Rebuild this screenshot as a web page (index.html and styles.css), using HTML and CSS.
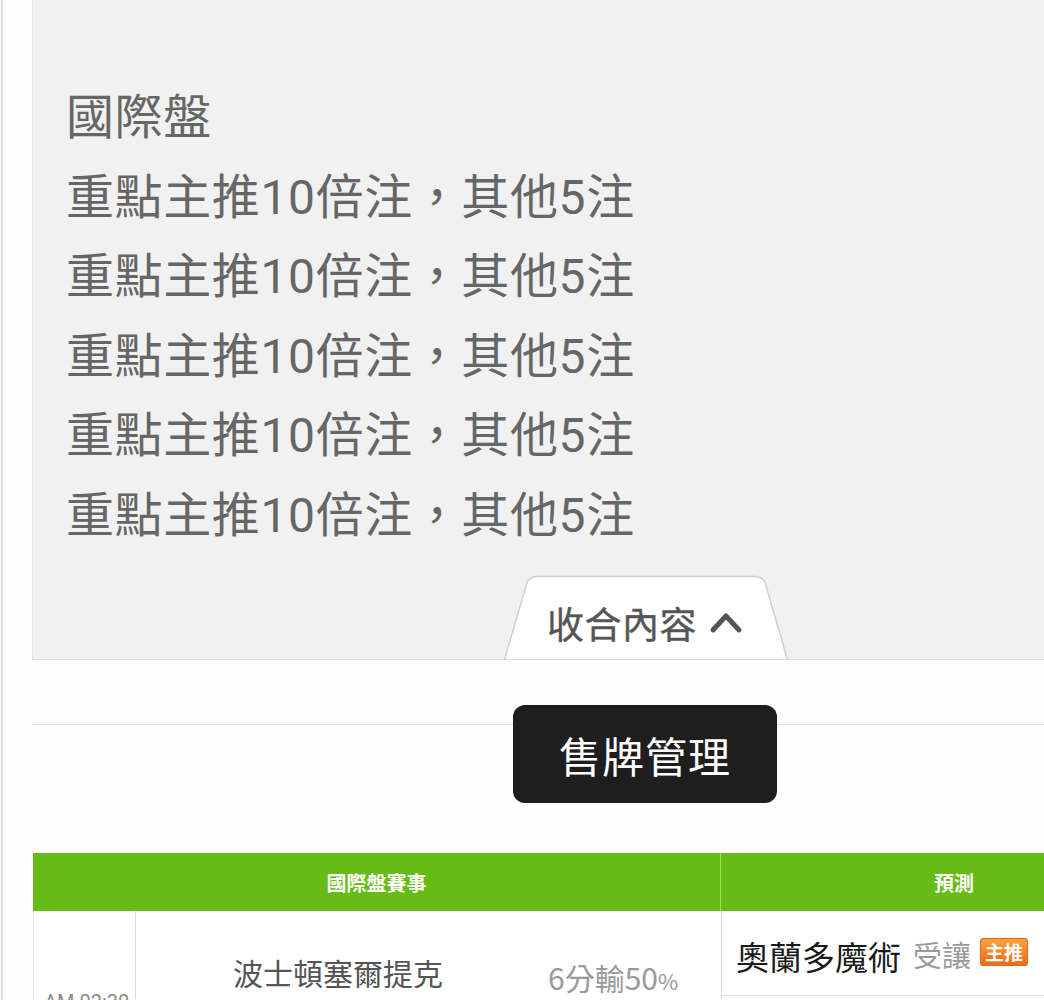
FILE: index.html
```html
<!DOCTYPE html>
<html lang="zh-Hant">
<head>
<meta charset="utf-8">
<link rel="stylesheet" href="styles.css">
</head>
<body>
<div class="page">
  <section class="notice">
    <div class="lines">
      <p>國際盤</p>
      <p>重點主推10倍注，其他5注</p>
      <p>重點主推10倍注，其他5注</p>
      <p>重點主推10倍注，其他5注</p>
      <p>重點主推10倍注，其他5注</p>
      <p>重點主推10倍注，其他5注</p>
    </div>
    <div class="tab">
      <svg class="tab-bg" width="284" height="85" viewBox="0 0 284 85">
        <path d="M0.5 85 L22.5 9 Q24.5 1.5 33 1.5 L251 1.5 Q259.5 1.5 261.5 9 L283.5 85 Z" fill="#ffffff" stroke="#cfcfcf" stroke-width="1.5"/>
      </svg>
      <span class="tab-label">收合內容</span>
      <svg class="chev" width="34" height="24" viewBox="0 0 34 24">
        <path d="M4 20 L17 6 L30 20" fill="none" stroke="#555" stroke-width="5" stroke-linecap="round" stroke-linejoin="round"/>
      </svg>
    </div>
  </section>
  <div class="divider-band"></div>
  <div class="tooltip">售牌管理</div>
  <div class="table">
    <div class="th th-main">國際盤賽事</div>
    <div class="th th-pred">預測</div>
    <div class="td td-time"><span>AM 02:30</span></div>
    <div class="td td-team">波士頓塞爾提克</div>
    <div class="td td-hcp">6分輸50<small>%</small></div>
    <div class="td td-pred">
      <div class="pred-row">
        <span class="pred-team">奧蘭多魔術</span>
        <span class="pred-type">受讓</span>
        <span class="badge">主推</span>
      </div>
    </div>
  </div>
</div>
</body>
</html>
```

FILE: styles.css
```css
html, body {
  margin: 0;
  padding: 0;
  overflow: hidden;
}
body {
  background: #fdfdfd;
  font-family: "Noto Sans CJK TC", "Noto Sans", sans-serif;
  width: 1044px;
  height: 1000px;
}
.page {
  position: relative;
  height: 1000px;
  border-left: 2px solid #dedede;
  margin-left: 1px;
  padding-left: 29px;
}
.notice {
  background: #f1f1f1;
  border-left: 1px solid #e2e2e2;
  border-bottom: 1px solid #dcdcdc;
  width: 1200px;
  height: 660px;
  box-sizing: border-box;
  padding: 78px 0 0 33px;
  display: flex;
  flex-direction: column;
}
.lines p {
  margin: 0;
  font-family: "Roboto", "Noto Sans CJK TC", sans-serif;
  font-size: 48px;
  line-height: 79.6px;
  color: #666666;
  letter-spacing: 0.6px;
}
.tab {
  position: relative;
  margin-top: 19px;
  margin-left: 438px;
  width: 284px;
  height: 85px;
  display: flex;
  align-items: center;
  padding-left: 43px;
  box-sizing: border-box;
  padding-top: 14px;
}
.tab-bg {
  position: absolute;
  left: 0;
  top: 0;
}
.tab-label {
  position: relative;
  font-size: 37px;
  color: #555555;
  line-height: 1;
  letter-spacing: 0.5px;
  -webkit-text-stroke: 0.4px #555555;
}
.chev {
  position: relative;
  margin-left: 12px;
  margin-top: -4px;
}
.divider-band {
  height: 64px;
  border-bottom: 1px solid #dddddd;
  width: 1200px;
}
.tooltip {
  position: absolute;
  left: 510px;
  top: 705px;
  width: 264px;
  height: 98px;
  border-radius: 12px;
  background: #1e1e1e;
  color: #ffffff;
  font-size: 42px;
  display: flex;
  align-items: center;
  justify-content: center;
  letter-spacing: 1px;
}
.table {
  margin-top: 128px;
  margin-left: 1px;
  display: grid;
  grid-template-columns: 103px 404px 181px 466px;
  grid-template-rows: 58px 100px;
  width: 1154px;
}
.th {
  background: #66bb14;
  color: #ffffff;
  font-weight: 700;
  font-size: 20px;
  display: flex;
  align-items: center;
  justify-content: center;
}
.th-main {
  grid-column: 1 / 4;
  border-right: 1px solid #a5d86a;
}
.td {
  background: #ffffff;
}
.td-time {
  border-left: 1px solid #e2e2e2;
  border-right: 1px solid #dddddd;
  padding: 81px 0 0 10px;
  font-size: 20px;
  color: #8a8a8a;
  line-height: 1;
  font-family: "Roboto", "Noto Sans", sans-serif;
}
.td-team {
  text-align: center;
  padding-top: 43px;
  font-size: 30px;
  line-height: 36px;
  color: #555555;
}
.td-hcp {
  padding: 48px 0 0 8px;
  font-size: 30px;
  line-height: 36px;
  color: #9a9a9a;
}
.td-hcp small {
  font-size: 22px;
}
.td-pred {
  border-left: 1px solid #dddddd;
}
.pred-row {
  height: 85px;
  border-bottom: 1px solid #dddddd;
  display: flex;
  align-items: center;
  padding-left: 14px;
  padding-top: 6px;
  box-sizing: border-box;
}
.pred-team {
  font-size: 33px;
  line-height: 40px;
  color: #1a1a1a;
}
.pred-type {
  font-size: 29px;
  line-height: 40px;
  color: #9a9a9a;
  margin-left: 12px;
  margin-top: -4px;
}
.badge {
  margin-left: 9px;
  margin-top: -8px;
  width: 48px;
  height: 28px;
  border-radius: 4px;
  background: linear-gradient(#f9a441, #ec6a10);
  color: #ffffff;
  font-size: 19px;
  font-weight: 700;
  line-height: 28px;
  text-align: center;
  box-shadow: inset 0 0 0 1px #e06a1e;
}
```
